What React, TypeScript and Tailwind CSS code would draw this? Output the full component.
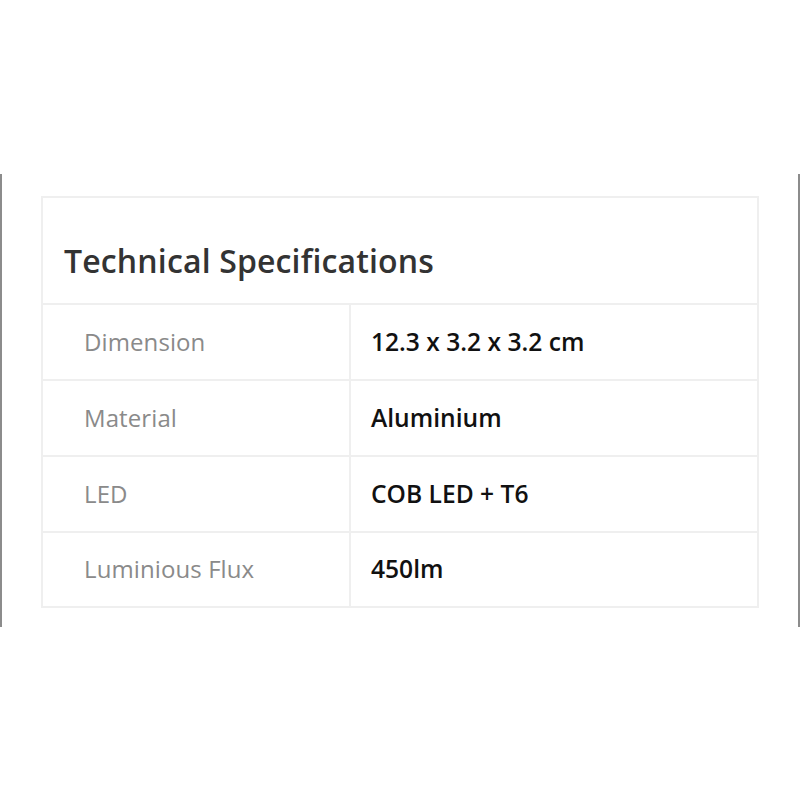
export default function App() {
  const rows = [
    ["Dimension", "12.3 x 3.2 x 3.2 cm"],
    ["Material", "Aluminium"],
    ["LED", "COB LED + T6"],
    ["Luminious Flux", "450lm"],
  ];
  return (
    <div
      className="w-[800px] h-[800px] bg-white pt-[174px]"
      style={{ fontFamily: '"Open Sans", sans-serif' }}
    >
      <div className="h-[453px] border-l-2 border-r-2 border-[#8c8c8c] pt-[22px] pl-[39px] pr-[39px]">
        <div className="w-[718px] border-2 border-[#efefef]">
          <div className="h-[107px] border-b-2 border-[#efefef] pl-[21px] pt-[41px]">
            <h2 className="text-[32px] leading-[44px] font-semibold text-[#333333] tracking-[0.15px]">
              Technical Specifications
            </h2>
          </div>
          {rows.map(([k, v], i) => (
            <div
              key={k}
              className={`flex ${i < rows.length - 1 ? "h-[76px] border-b-2 border-[#efefef]" : "h-[73px]"}`}
            >
              <div className="w-[308px] border-r-2 border-[#efefef] flex items-center pl-[41px] pb-[2px] text-[24px] leading-[33px] text-[#8a8a8a] tracking-[0.1px]">
                {k}
              </div>
              <div className="flex-1 flex items-center pl-[20px] pb-[1px] text-[24.6px] leading-[34px] text-[#111111] font-[560]">
                {v}
              </div>
            </div>
          ))}
        </div>
      </div>
    </div>
  );
}
